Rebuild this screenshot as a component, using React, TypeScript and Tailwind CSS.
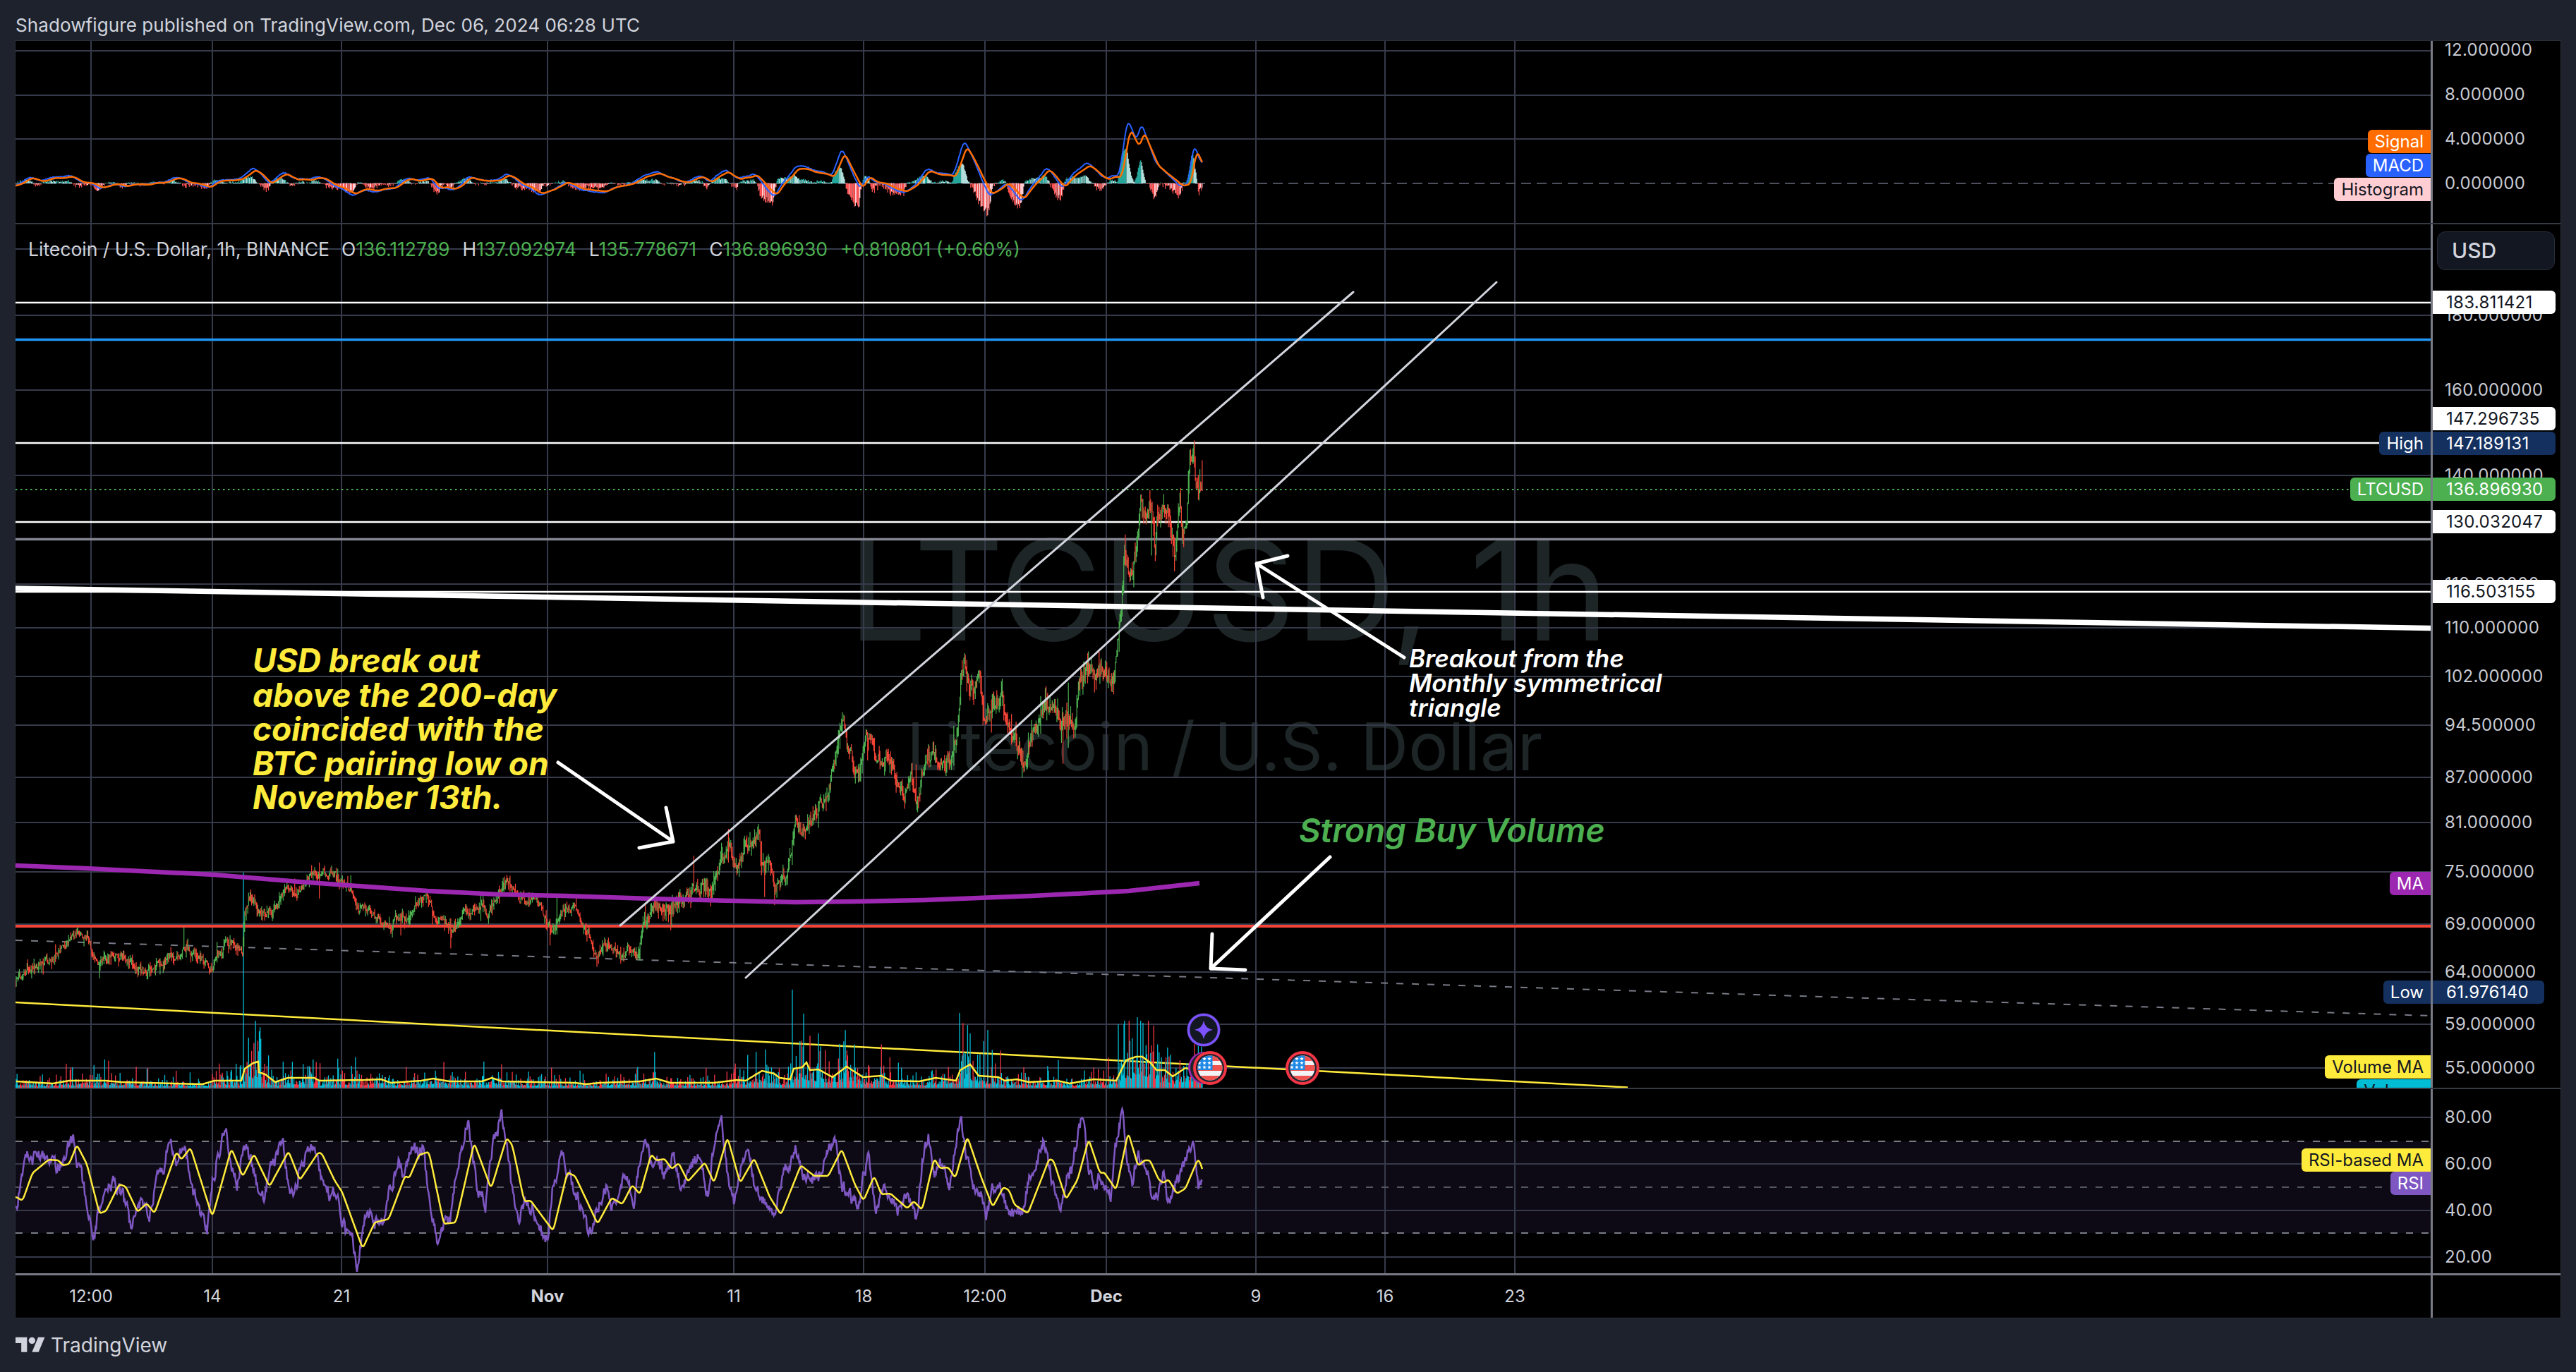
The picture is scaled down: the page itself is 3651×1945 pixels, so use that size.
// Litecoin chart snapshot. Chart data is traced from the picture, small noise fills in the hourly bars.
type Pt = [number, number];

const PRICE: Pt[] = [[22,1393],[39,1373],[67,1362],[88,1347],[103,1330],[118,1327],[124,1333],[133,1357],[142,1365],[161,1353],[179,1355],[194,1372],[215,1377],[230,1363],[245,1355],[255,1353],[264,1342],[279,1353],[300,1372],[309,1357],[321,1337],[339,1340],[344,1353],[347,1300],[355,1267],[364,1287],[376,1297],[394,1283],[406,1255],[418,1272],[436,1248],[445,1235],[473,1237],[485,1248],[497,1260],[506,1287],[524,1290],[533,1303],[555,1313],[570,1295],[576,1305],[585,1283],[606,1270],[618,1303],[642,1320],[661,1290],[685,1287],[691,1300],[703,1270],[721,1248],[736,1270],[764,1283],[776,1312],[785,1320],[794,1290],[812,1288],[830,1313],[845,1353],[858,1337],[879,1357],[891,1337],[906,1357],[912,1303],[921,1292],[935,1277],[948,1290],[973,1273],[999,1250],[1007,1270],[1019,1227],[1032,1200],[1045,1230],[1060,1197],[1075,1190],[1081,1227],[1091,1213],[1098,1263],[1116,1237],[1122,1200],[1127,1150],[1137,1177],[1152,1157],[1172,1137],[1183,1080],[1195,1020],[1203,1067],[1218,1097],[1228,1030],[1244,1083],[1262,1080],[1274,1107],[1282,1130],[1292,1107],[1300,1140],[1310,1087],[1315,1073],[1346,1080],[1355,1057],[1362,960],[1367,940],[1374,975],[1388,960],[1396,1020],[1407,1007],[1421,997],[1432,1030],[1451,1073],[1465,1037],[1484,997],[1502,1020],[1524,1020],[1531,963],[1542,950],[1561,953],[1579,967],[1586,897],[1590,853],[1594,787],[1605,820],[1612,780],[1617,680],[1618,717],[1625,740],[1632,713],[1637,780],[1640,740],[1647,720],[1657,733],[1665,785],[1672,707],[1675,755],[1682,737],[1686,650],[1692,640],[1695,693],[1699,705],[1702,690],[1706,697]];

const SIGNAL: Pt[] = [[23,263],[46,255],[103,252],[126,257],[144,267],[172,260],[195,264],[241,256],[264,255],[301,265],[327,253],[344,255],[362,242],[385,257],[408,248],[425,256],[450,251],[505,273],[563,265],[586,254],[614,254],[626,267],[643,268],[668,253],[695,258],[720,249],[746,262],[769,272],[786,272],[804,257],[844,273],[884,263],[901,262],[918,247],[936,247],[964,257],[999,253],[1010,258],[1033,241],[1050,257],[1073,247],[1102,277],[1131,238],[1148,240],[1165,248],[1183,248],[1197,218],[1223,268],[1234,250],[1263,265],[1286,272],[1318,245],[1355,249],[1370,210],[1389,240],[1406,275],[1429,262],[1452,279],[1487,242],[1510,262],[1544,235],[1573,253],[1590,253],[1602,182],[1615,208],[1622,185],[1642,238],[1659,247],[1676,263],[1688,260],[1696,215],[1705,235]];

const VOL_MA: Pt[] = [[23,1533],[75,1536],[98,1532],[149,1532],[172,1534],[287,1537],[304,1532],[342,1532],[347,1515],[359,1507],[366,1505],[367,1520],[376,1523],[390,1534],[408,1528],[445,1528],[453,1532],[517,1531],[540,1530],[554,1535],[597,1532],[614,1529],[637,1533],[683,1533],[697,1528],[712,1533],[815,1535],[830,1537],[850,1535],[907,1533],[930,1529],[950,1535],[1011,1535],[1045,1531],[1057,1532],[1080,1518],[1097,1522],[1105,1528],[1120,1530],[1125,1515],[1137,1513],[1143,1506],[1148,1517],[1160,1516],[1180,1527],[1200,1512],[1223,1527],[1249,1525],[1263,1532],[1303,1533],[1326,1528],[1355,1532],[1361,1517],[1375,1509],[1387,1525],[1415,1527],[1424,1532],[1441,1530],[1458,1534],[1499,1532],[1516,1536],[1550,1530],[1582,1532],[1596,1503],[1610,1498],[1619,1498],[1631,1507],[1639,1517],[1651,1517],[1662,1526],[1680,1514],[1706,1520]];

const RSI_MA: Pt[] = [[23,1697],[32,1702],[46,1663],[69,1644],[83,1645],[89,1652],[98,1650],[109,1623],[123,1650],[141,1720],[150,1717],[169,1679],[178,1682],[195,1718],[208,1706],[219,1720],[250,1633],[257,1644],[270,1627],[301,1725],[328,1628],[344,1668],[360,1636],[382,1682],[409,1632],[425,1673],[451,1634],[456,1635],[474,1673],[485,1690],[514,1770],[531,1733],[551,1728],[574,1667],[580,1670],[594,1637],[608,1633],[629,1735],[646,1733],[672,1620],[696,1685],[718,1613],[726,1623],[743,1703],[752,1702],[784,1745],[804,1662],[815,1667],[847,1735],[867,1698],[882,1707],[896,1680],[907,1693],[923,1636],[930,1645],[942,1643],[952,1657],[962,1649],[975,1675],[999,1648],[1012,1677],[1031,1612],[1049,1677],[1069,1642],[1091,1697],[1107,1722],[1135,1652],[1154,1667],[1174,1667],[1193,1629],[1212,1680],[1224,1702],[1239,1667],[1249,1693],[1262,1692],[1286,1713],[1295,1703],[1307,1715],[1324,1642],[1332,1656],[1344,1655],[1354,1670],[1371,1611],[1390,1667],[1407,1711],[1422,1683],[1430,1687],[1438,1708],[1457,1720],[1487,1643],[1493,1645],[1511,1700],[1527,1673],[1543,1615],[1559,1663],[1565,1662],[1582,1687],[1599,1605],[1613,1653],[1622,1645],[1630,1645],[1642,1672],[1649,1677],[1656,1672],[1668,1692],[1680,1685],[1697,1645],[1700,1645],[1707,1667]];

const MA200: Pt[] = [[22,1227],[121,1231],[303,1240],[424,1250],[606,1263],[709,1268],[800,1270],[922,1274],[1040,1277],[1127,1279],[1208,1278],[1310,1276],[1463,1270],[1600,1263],[1700,1252]];

const V_LINES = [129, 301, 484, 776, 1040, 1224, 1396, 1568, 1780, 1963, 2147];
const MACD_GRID = [72, 135, 197];
const MAIN_GRID = [353, 447, 553, 674, 828, 890, 959, 1028, 1102, 1166, 1236, 1310, 1378, 1452, 1514];
const RSI_GRID = [1584, 1650, 1716, 1782];

// the price scale is not even, so ticks sit at their value on the axis
const PRICE_TICKS = [
  { top: 'top-[114px]', text: '180.000000' },
  { top: 'top-[220px]', text: '160.000000' },
  { top: 'top-[341px]', text: '140.000000' },
  { top: 'top-[495px]', text: '118.000000' },
  { top: 'top-[557px]', text: '110.000000' },
  { top: 'top-[626px]', text: '102.000000' },
  { top: 'top-[695px]', text: '94.500000' },
  { top: 'top-[769px]', text: '87.000000' },
  { top: 'top-[833px]', text: '81.000000' },
  { top: 'top-[903px]', text: '75.000000' },
  { top: 'top-[977px]', text: '69.000000' },
  { top: 'top-[1045px]', text: '64.000000' },
  { top: 'top-[1119px]', text: '59.000000' },
  { top: 'top-[1181px]', text: '55.000000' },
];

const PRICE_TAGS = [
  { top: 'top-[94px]', tone: 'w-[174px] bg-white text-[#131722]', text: '183.811421' },
  { top: 'top-[259px]', tone: 'w-[174px] bg-white text-[#131722]', text: '147.296735' },
  { top: 'top-[294px]', tone: 'w-[174px] bg-[#14305f] text-white', text: '147.189131' },
  { top: 'top-[359px]', tone: 'w-[174px] bg-[#4caf50] text-white', text: '136.896930' },
  { top: 'top-[405px]', tone: 'w-[174px] bg-white text-[#131722]', text: '130.032047' },
  { top: 'top-[504px]', tone: 'w-[174px] bg-white text-[#131722]', text: '116.503155' },
  { top: 'top-[1072px]', tone: 'w-[158px] bg-[#14305f] text-white', text: '61.976140' },
];

const PLOT_TAGS = [
  { top: 'top-[294px]', tone: 'bg-[#14305f] text-white', text: 'High' },
  { top: 'top-[359px]', tone: 'bg-[#4caf50] text-white', text: 'LTCUSD' },
  { top: 'top-[918px]', tone: 'bg-[#9c27b0] text-white', text: 'MA' },
  { top: 'top-[1072px]', tone: 'bg-[#14305f] text-white', text: 'Low' },
  { top: 'top-[1212px]', tone: 'bg-[#00bcd4] text-[#131722]', text: 'Volume' },
  { top: 'top-[1178px]', tone: 'bg-[#ffeb3b] text-[#131722]', text: 'Volume MA' },
];

// each cell is centred on its vertical grid line
const TIME_LABELS = [
  { w: 'w-[214px]', text: '12:00' },
  { w: 'w-[130px]', text: '14' },
  { w: 'w-[236px]', text: '21' },
  { w: 'w-[348px] font-bold', text: 'Nov' },
  { w: 'w-[180px]', text: '11' },
  { w: 'w-[188px]', text: '18' },
  { w: 'w-[156px]', text: '12:00' },
  { w: 'w-[188px] font-bold', text: 'Dec' },
  { w: 'w-[236px]', text: '9' },
  { w: 'w-[130px]', text: '16' },
  { w: 'w-[238px]', text: '23' },
];

const LEGEND = [
  { label: 'O', value: '136.112789' },
  { label: 'H', value: '137.092974' },
  { label: 'L', value: '135.778671' },
  { label: 'C', value: '136.896930' },
];

const STEP = 1.09;
const START = 22;
const COUNT = Math.floor((1706 - START) / STEP);

function rng(seed: number) {
  let a = seed;
  return () => {
    a = (a + 0x6d2b79f5) | 0;
    let t = Math.imul(a ^ (a >>> 15), 1 | a);
    t = (t + Math.imul(t ^ (t >>> 7), 61 | t)) ^ t;
    return ((t ^ (t >>> 14)) >>> 0) / 4294967296;
  };
}

function at(pts: Pt[], x: number) {
  if (x <= pts[0][0]) return pts[0][1];
  for (let i = 1; i < pts.length; i++) {
    if (x <= pts[i][0]) {
      const [x0, y0] = pts[i - 1];
      const [x1, y1] = pts[i];
      return y0 + ((x - x0) / (x1 - x0)) * (y1 - y0);
    }
  }
  return pts[pts.length - 1][1];
}

// rounds off the corners of a traced line
function soft(pts: Pt[], x: number, w: number) {
  let sum = 0;
  for (let k = -2; k <= 2; k++) sum += at(pts, x + (k * w) / 2);
  return sum / 5;
}

const f = (n: number) => n.toFixed(1);
const line = (pts: Pt[]) => 'M' + pts.map(([x, y]) => `${f(x)} ${f(y)}`).join('L');

function buildCandles() {
  const r = rng(11);
  let up = '';
  let down = '';
  let noise = 0;
  let prev = at(PRICE, START);
  for (let i = 0; i < COUNT; i++) {
    const x = START + i * STEP;
    const size = x > 1350 ? 8 : x > 900 ? 6.5 : 4;
    noise = 0.6 * noise + (r() - 0.5) * size * 2.6;
    const close = at(PRICE, x) + noise;
    const spike = r() > 0.96 ? 3 : 1;
    const high = Math.min(prev, close) - r() * r() * size * 3 * spike;
    const low = Math.max(prev, close) + r() * r() * size * 3.5 * spike;
    const wick = `M${f(x)} ${f(high)}V${f(low)}`;
    if (close < prev) up += wick;
    else down += wick;
    prev = close;
  }
  return { up, down };
}

function buildVolume() {
  const r = rng(5);
  let cyan = '';
  let red = '';
  for (let i = 0; i < COUNT; i++) {
    const x = START + i * STEP;
    const base = 1542 - at(VOL_MA, x);
    const h = base * (0.3 + 0.65 * Math.pow(-Math.log(r() + 0.0001), 1.2));
    const bar = `M${f(x)} 1542V${f(1542 - Math.min(h, base * 4, 95))}`;
    if (r() > 0.45) cyan += bar;
    else red += bar;
  }
  for (const [x, y] of [[345, 1237], [1123, 1403], [1139, 1437], [1160, 1465], [1190, 1480], [1360, 1436], [1375, 1465], [1400, 1460], [1612, 1442], [1585, 1452], [1593, 1452], [1620, 1450]]) {
    cyan += `M${x} 1542V${y}`;
  }
  return { cyan, red };
}

function buildMacd() {
  const r = rng(23);
  const blue: Pt[] = [];
  const orange: Pt[] = [];
  const bars = { teal: '', pale: '', pink: '', red: '' };
  const wave = (x: number) => 1.5 * Math.sin(x / 8.5) + 1.1 * Math.sin(x / 4.7 + 1);
  let last = 0;
  for (let i = 0; i < COUNT; i++) {
    const x = START + i * STEP;
    const s = soft(SIGNAL, x, 3) + wave(x);
    const b = 260 + (soft(SIGNAL, x + 4, 3) + wave(x + 4) - 260) * 1.18 + (r() - 0.5);
    orange.push([x, s]);
    blue.push([x, b]);
    const d = (s - b) * 1.5 + (r() - 0.5) * 3;
    // selling bars hang further below the zero line than the raw gap
    const h = d < 0 ? d * (x > 1000 ? 3 : 1.8) : d;
    const bar = `M${f(x)} 260V${f(260 - h)}`;
    if (h >= 0) {
      if (h > last) bars.teal += bar;
      else bars.pale += bar;
    } else if (h < last) bars.red += bar;
    else bars.pink += bar;
    last = h;
  }
  return { blue: line(blue), orange: line(orange), bars };
}

function buildRsi() {
  const r = rng(41);
  const rsi: Pt[] = [];
  const ma: Pt[] = [];
  let fast = 0;
  let slow = 0;
  for (let i = 0; i < COUNT; i++) {
    const x = START + i * STEP;
    fast = 0.5 * fast + (r() - 0.5) * 17;
    slow = 0.9 * slow + (r() - 0.5) * 8;
    const m = soft(RSI_MA, x, 2);
    const ahead = at(RSI_MA, x + 8);
    rsi.push([x, Math.max(1552, ahead + (ahead - m) * 0.9 + fast + slow)]);
    ma.push([x, m]);
  }
  return { rsi: line(rsi), ma: line(ma) };
}

const candles = buildCandles();
const volume = buildVolume();
const macd = buildMacd();
const rsi = buildRsi();

function Grid({ rows, top, bottom }: { rows: number[]; top: number; bottom: number }) {
  return (
    <g stroke="#363a4a" strokeWidth="2">
      {V_LINES.map((x) => (
        <line key={x} x1={x} x2={x} y1={top} y2={bottom} />
      ))}
      {rows.map((y) => (
        <line key={y} x1="22" x2="3446" y1={y} y2={y} />
      ))}
    </g>
  );
}

function FlagIcon({ cx, cy, id }: { cx: number; cy: number; id: string }) {
  const stars: Pt[] = [];
  for (const sx of [-15, -8, -1]) for (const sy of [-13, -7, -1]) stars.push([sx, sy]);
  return (
    <g transform={`translate(${cx} ${cy})`}>
      <circle r="24" fill="#f23645" />
      <circle r="20" fill="#1e222d" />
      <clipPath id={id}>
        <circle r="17.5" />
      </clipPath>
      <g clipPath={`url(#${id})`}>
        <rect x="-18" y="-18" width="36" height="36" fill="#f2f2f4" />
        <rect x="-18" y="-18" width="36" height="8" fill="#ef5350" />
        <rect x="-18" y="-4" width="36" height="8" fill="#ef5350" />
        <rect x="-18" y="11" width="36" height="8" fill="#ef5350" />
        <rect x="-18" y="-18" width="21.5" height="21" fill="#1e88e5" />
        {stars.map(([x, y]) => (
          <path key={`${x}${y}`} transform={`translate(${x} ${y})`} d="M0 -2.8L.8 -.9L2.7 -.9L1.2 .4L1.7 2.3L0 1.2L-1.7 2.3L-1.2 .4L-2.7 -.9L-.8 -.9Z" fill="#fff" />
        ))}
      </g>
    </g>
  );
}

function Tag({ tone, children }: { tone: string; children: string }) {
  return <div className={`flex h-[33px] items-center rounded-l-md px-[10px] text-[24px] ${tone}`}>{children}</div>;
}

function TickColumn({ gap, top, ticks }: { gap: string; top: string; ticks: string[] }) {
  return (
    <div className={`flex flex-1 flex-col pl-[17px] text-[24px] leading-[30px] tracking-[0.3px] text-[#c8cad2] ${gap} ${top}`}>
      {ticks.map((t) => (
        <span key={t}>{t}</span>
      ))}
    </div>
  );
}

export default function App() {
  return (
    <div className="flex h-[1945px] w-[3651px] flex-col overflow-hidden bg-[#1e222d] font-['Inter','Noto_Sans',sans-serif]">
      <div className="flex h-[57px] shrink-0 items-center pt-[13px] pl-[22px] text-[26px] tracking-[0.1px] text-[#d1d4dc]">
        Shadowfigure published on TradingView.com, Dec 06, 2024 06:28 UTC
      </div>

      <div className="ml-[21px] flex w-[3609px] shrink-0 flex-col border border-[#2a2e39] bg-black">
        {/* MACD */}
        <div className="flex h-[260px] border-b-2 border-[#363a45]">
          <div className="relative w-[3426px] shrink-0 overflow-hidden border-r-[3px] border-[#787b86]">
            <svg className="absolute inset-0 block" width="3423" height="258" viewBox="22 58 3423 258">
              <Grid rows={MACD_GRID} top={58} bottom={318} />
              <line x1="22" x2="3446" y1="260" y2="260" stroke="#4c4f5c" strokeWidth="2" strokeDasharray="14 8" />
              <g strokeWidth="1.2" fill="none">
                <path d={macd.bars.teal} stroke="#26a69a" />
                <path d={macd.bars.pale} stroke="#b2dfdb" />
                <path d={macd.bars.pink} stroke="#ffcdd2" />
                <path d={macd.bars.red} stroke="#ff5252" />
              </g>
              <path d={macd.blue} fill="none" stroke="#2962ff" strokeWidth="2" />
              <path d={macd.orange} fill="none" stroke="#ff6d00" strokeWidth="2.5" />
            </svg>
            <div className="absolute top-[126px] right-0 flex flex-col items-end gap-px">
              <Tag tone="bg-[#ff6d00] text-white">Signal</Tag>
              <Tag tone="bg-[#2962ff] text-white">MACD</Tag>
              <Tag tone="bg-[#ffcdd2] text-[#131722]">Histogram</Tag>
            </div>
          </div>
          <TickColumn gap="gap-[33px]" top="-mt-[2px]" ticks={['12.000000', '8.000000', '4.000000', '0.000000']} />
        </div>

        {/* Price and volume */}
        <div className="flex h-[1226px] border-b-2 border-[#363a45]">
          <div className="relative w-[3426px] shrink-0 overflow-hidden border-r-[3px] border-[#787b86]">
            <div className="absolute top-[419px] left-[1180px] text-[198px] leading-none whitespace-nowrap text-[#1e2526]">LTCUSD, 1h</div>
            <div className="absolute top-[693px] left-[1263px] text-[94px] leading-none whitespace-nowrap text-[#1e2526]">Litecoin / U.S. Dollar</div>
            <svg className="absolute inset-0 block" width="3423" height="1224" viewBox="22 318 3423 1224">
              <Grid rows={MAIN_GRID} top={318} bottom={1544} />
              <line x1="22" x2="3446" y1="429" y2="429" stroke="#fff" strokeWidth="2.5" />
              <line x1="22" x2="3446" y1="481.5" y2="481.5" stroke="#2196f3" strokeWidth="3.5" />
              <line x1="22" x2="3446" y1="628" y2="628" stroke="#fff" strokeWidth="2.5" />
              <line x1="22" x2="3332" y1="694" y2="694" stroke="#4caf50" strokeWidth="2" strokeDasharray="2.5 4.5" />
              <line x1="22" x2="3446" y1="740" y2="740" stroke="#fff" strokeWidth="2.5" />
              <line x1="22" x2="3446" y1="764.5" y2="764.5" stroke="#838590" strokeWidth="3.5" />
              <line x1="22" x2="3446" y1="839" y2="839" stroke="#fff" strokeWidth="2.5" />
              <line x1="22" x2="3446" y1="1313" y2="1313" stroke="#f44336" strokeWidth="4" />
              <line x1="22" x2="3446" y1="1333" y2="1440" stroke="#787b86" strokeWidth="2" strokeDasharray="10 12" />
              <line x1="22" x2="2307" y1="1421" y2="1541.5" stroke="#ffeb3b" strokeWidth="2.5" />

              <path d={volume.red} stroke="#f23645" strokeWidth="1.3" fill="none" />
              <path d={volume.cyan} stroke="#00bcd4" strokeWidth="1.3" fill="none" />
              <path d={line(VOL_MA)} stroke="#ffeb3b" strokeWidth="2.5" fill="none" />

              <path d={candles.up} stroke="#4caf50" strokeWidth="1.2" fill="none" />
              <path d={candles.down} stroke="#f44336" strokeWidth="1.2" fill="none" />
              <path d={line(MA200)} stroke="#9c27b0" strokeWidth="6.5" fill="none" />

              <line x1="22" x2="3446" y1="834" y2="890.5" stroke="#fff" strokeWidth="7.5" />
              <g stroke="#d1d4dc" strokeWidth="3" strokeLinecap="round">
                <line x1="879" y1="1312" x2="1918" y2="414" />
                <line x1="1057" y1="1386" x2="2121" y2="400" />
              </g>
              <g fill="none" stroke="#fff" strokeWidth="5" strokeLinecap="round" strokeLinejoin="round">
                <path d="M791 1081L954 1193M944 1145L954 1193L906 1202" />
                <path d="M1990 932L1781 799M1825 788L1781 799L1790 847" />
                <path d="M1885 1215L1716 1373M1718 1324L1716 1373L1765 1375" />
              </g>

              <circle cx="1706" cy="1460" r="24" fill="#1e222d" />
              <circle cx="1706" cy="1460" r="21.5" fill="#131722" stroke="#7c52ff" strokeWidth="3.5" />
              <path d="M1706 1447Q1708 1458 1719 1460Q1708 1462 1706 1473Q1704 1462 1693 1460Q1704 1458 1706 1447Z" fill="#7c52ff" />
              <circle cx="1707" cy="1514" r="23" fill="#9c27b0" />
              <circle cx="1709" cy="1514" r="22" fill="#1e222d" />
              <FlagIcon cx={1715} cy={1514} id="flag-a" />
              <FlagIcon cx={1846} cy={1514} id="flag-b" />
            </svg>

            <div className="absolute top-[19px] left-[18px] flex h-[34px] items-center text-[26.5px] whitespace-nowrap text-[#d1d4dc]">
              <span className="mr-[17px]">Litecoin / U.S. Dollar, 1h, BINANCE</span>
              {LEGEND.map((item) => (
                <span key={item.label} className="mr-[18px]">
                  {item.label}
                  <span className="text-[#4caf50]">{item.value}</span>
                </span>
              ))}
              <span className="text-[#4caf50]">+0.810801 (+0.60%)</span>
            </div>

            <div className="absolute top-[594px] left-[336px] text-[46px] leading-[48.5px] font-bold whitespace-nowrap text-[#ffeb3b] italic">
              USD break out
              <br />
              above the 200-day
              <br />
              coincided with the
              <br />
              BTC pairing low on
              <br />
              November 13th.
            </div>
            <div className="absolute top-[598px] left-[1975px] text-[35px] leading-[35px] font-semibold whitespace-nowrap text-white italic">
              Breakout from the
              <br />
              Monthly symmetrical
              <br />
              triangle
            </div>
            <div className="absolute top-[835px] left-[1819px] text-[47px] leading-[48px] font-semibold whitespace-nowrap text-[#4caf50] italic">Strong Buy Volume</div>

            {PLOT_TAGS.map((tag) => (
              <div key={tag.text} className={`absolute right-0 flex h-[33px] items-center rounded-l-md px-[10px] text-[24px] ${tag.top} ${tag.tone}`}>
                {tag.text}
              </div>
            ))}
          </div>
          <div className="relative flex-1">
            {PRICE_TICKS.map((tick) => (
              <div key={tick.text} className={`absolute left-[17px] text-[24px] leading-[30px] tracking-[0.3px] text-[#c8cad2] ${tick.top}`}>
                {tick.text}
              </div>
            ))}
            <div className="absolute top-[10px] left-[6px] flex h-[55px] w-[167px] items-center rounded-xl border border-[#2a2e39] bg-[#131722] pl-[20px] text-[30px] font-medium text-[#d1d4dc]">USD</div>
            {PRICE_TAGS.map((tag) => (
              <div key={tag.text} className={`absolute left-0 flex h-[33px] items-center rounded-r-md pl-[19px] text-[24px] tracking-[0.3px] ${tag.top} ${tag.tone}`}>
                {tag.text}
              </div>
            ))}
          </div>
        </div>

        {/* RSI */}
        <div className="flex h-[261px]">
          <div className="relative w-[3426px] shrink-0 overflow-hidden border-r-[3px] border-[#787b86]">
            <svg className="absolute inset-0 block" width="3423" height="261" viewBox="22 1544 3423 261">
              <rect x="22" y="1618" width="3424" height="130" fill="#0d0a15" />
              <Grid rows={RSI_GRID} top={1544} bottom={1806} />
              <g stroke="#787b86" strokeWidth="2" strokeDasharray="10 12">
                <line x1="22" x2="3446" y1="1618" y2="1618" />
                <line x1="22" x2="3446" y1="1683" y2="1683" stroke="#53555f" />
                <line x1="22" x2="3446" y1="1748" y2="1748" />
              </g>
              <path d={rsi.rsi} fill="none" stroke="#7e57c2" strokeWidth="2.5" />
              <path d={rsi.ma} fill="none" stroke="#ffeb3b" strokeWidth="2.5" />
            </svg>
            <div className="absolute top-[84px] right-0 flex flex-col items-end">
              <Tag tone="bg-[#ffeb3b] text-[#131722]">RSI-based MA</Tag>
              <Tag tone="bg-[#7e57c2] text-white">RSI</Tag>
            </div>
          </div>
          <TickColumn gap="gap-[36px]" top="pt-[25px]" ticks={['80.00', '60.00', '40.00', '20.00']} />
        </div>

        {/* Time axis */}
        <div className="flex h-[63px] border-t-[3px] border-[#787b86]">
          <div className="flex w-[3426px] shrink-0 items-center border-r-[3px] border-[#787b86] text-[24px] text-[#d1d4dc]">
            {TIME_LABELS.map((label, i) => (
              <span key={i} className={`shrink-0 text-center ${label.w}`}>
                {label.text}
              </span>
            ))}
          </div>
          <div className="flex-1" />
        </div>
      </div>

      <div className="flex flex-1 items-center gap-[8px] pl-[22px] text-[28px] text-[#d1d4dc]">
        <svg width="42" height="33" viewBox="0 0 36 28" fill="#d1d4dc">
          <path d="M14 22H7V11H0V4h14v18zM28 22h-8l7.5-18h8L28 22z" />
          <circle cx="20" cy="8" r="4" />
        </svg>
        <span>TradingView</span>
      </div>
    </div>
  );
}
